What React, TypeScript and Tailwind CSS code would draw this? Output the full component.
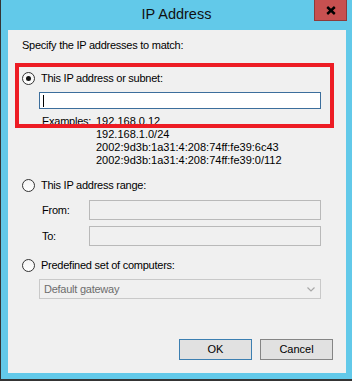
import React from 'react';

function Radio({ checked }: { checked?: boolean }) {
  return (
    <span className="w-[13px] h-[13px] rounded-full border border-[#333333] bg-gradient-to-b from-[#f4f4f4] to-[#ffffff] flex items-center justify-center shrink-0">
      {checked && <span className="w-[5px] h-[5px] rounded-full bg-[#111111]" />}
    </span>
  );
}

function RadioRow({ label, checked }: { label: string; checked?: boolean }) {
  return (
    <div className="flex items-center gap-[6px] h-[13px]">
      <Radio checked={checked} />
      <span className="leading-[13px] text-black tracking-[-0.25px]">{label}</span>
    </div>
  );
}

function FieldRow({ label, className }: { label: string; className?: string }) {
  return (
    <div className={'flex items-center ml-[20px] h-[20px] ' + (className ?? '')}>
      <span className="w-[47px] leading-[13px] text-black tracking-[-0.25px]">{label}</span>
      <div className="w-[232px] h-[20px] border border-[#b9b9b9] bg-[#f0f0f0]" />
    </div>
  );
}

export default function App() {
  const examples = [
    '192.168.0.12',
    '192.168.1.0/24',
    '2002:9d3b:1a31:4:208:74ff:fe39:6c43',
    '2002:9d3b:1a31:4:208:74ff:fe39:0/112',
  ];

  return (
    <div className="w-[352px] h-[381px] bg-[#62c9e9] border-l border-b-2 border-[#343434] flex flex-col relative font-['Liberation_Sans',Arial,sans-serif] text-[11px]">
      {/* title bar */}
      <div className="h-[30px] flex items-center justify-center shrink-0">
        <span className="text-[14.5px] text-[#111111]">IP Address</span>
      </div>
      <button className="absolute right-[5px] top-0 w-[33px] h-[21px] bg-[#c75050] border border-t-0 border-[#8e3a3a] flex items-center justify-center">
        <svg width="10" height="9" viewBox="0 0 10 9">
          <path d="M1.2 1 L8.8 8 M8.8 1 L1.2 8" stroke="#000" strokeWidth="2.4" />
        </svg>
      </button>

      {/* client area */}
      <div className="ml-[7px] w-[338px] h-[343px] bg-[#f0f0f0] relative flex flex-col pl-[14px] pt-[9px]">
        <div className="leading-[13px] text-black tracking-[-0.25px]">Specify the IP addresses to match:</div>

        <div className="mt-[20px]">
          <RadioRow label="This IP address or subnet:" checked />
        </div>
        <div className="mt-[7px] ml-[17px] w-[282px] h-[17px] border border-[#3c6e9c] bg-white flex items-center">
          <span className="ml-[3px] w-px h-[12px] bg-black" />
        </div>

        <div className="mt-[6px] ml-[20px] flex">
          <span className="w-[54px] leading-[13px] text-black tracking-[-0.25px]">Examples:</span>
          <div className="flex flex-col">
            {examples.map((e) => (
              <span key={e} className="leading-[13px] text-black">
                {e}
              </span>
            ))}
          </div>
        </div>

        <div className="mt-[12px]">
          <RadioRow label="This IP address range:" />
        </div>
        <FieldRow label="From:" className="mt-[8px]" />
        <FieldRow label="To:" className="mt-[6px]" />

        <div className="mt-[13px]">
          <RadioRow label="Predefined set of computers:" />
        </div>
        <div className="mt-[7px] ml-[17px] w-[282px] h-[20px] border border-[#c9c9c9] bg-[#f0f0f0] flex items-center justify-between pl-[4px] pr-[5px]">
          <span className="text-[#6d6d6d] leading-[13px] tracking-[-0.25px]">Default gateway</span>
          <svg width="8" height="5" viewBox="0 0 8 5">
            <path d="M0.5 0.5 L4 4 L7.5 0.5" stroke="#a8a8a8" strokeWidth="1.2" fill="none" />
          </svg>
        </div>

        <div className="mt-[40px] flex justify-end gap-[8px] pr-[13px]">
          <button className="w-[73px] h-[21px] bg-[#e1e1e1] border border-[#3c7fb1] text-black leading-[13px]">
            OK
          </button>
          <button className="w-[73px] h-[21px] bg-[#e1e1e1] border border-[#858585] text-black leading-[13px]">
            Cancel
          </button>
        </div>

        {/* red annotation box */}
        <div className="absolute left-[7px] top-[33px] w-[319px] h-[65px] border-4 border-[#ed1c24] pointer-events-none" />
      </div>
    </div>
  );
}
